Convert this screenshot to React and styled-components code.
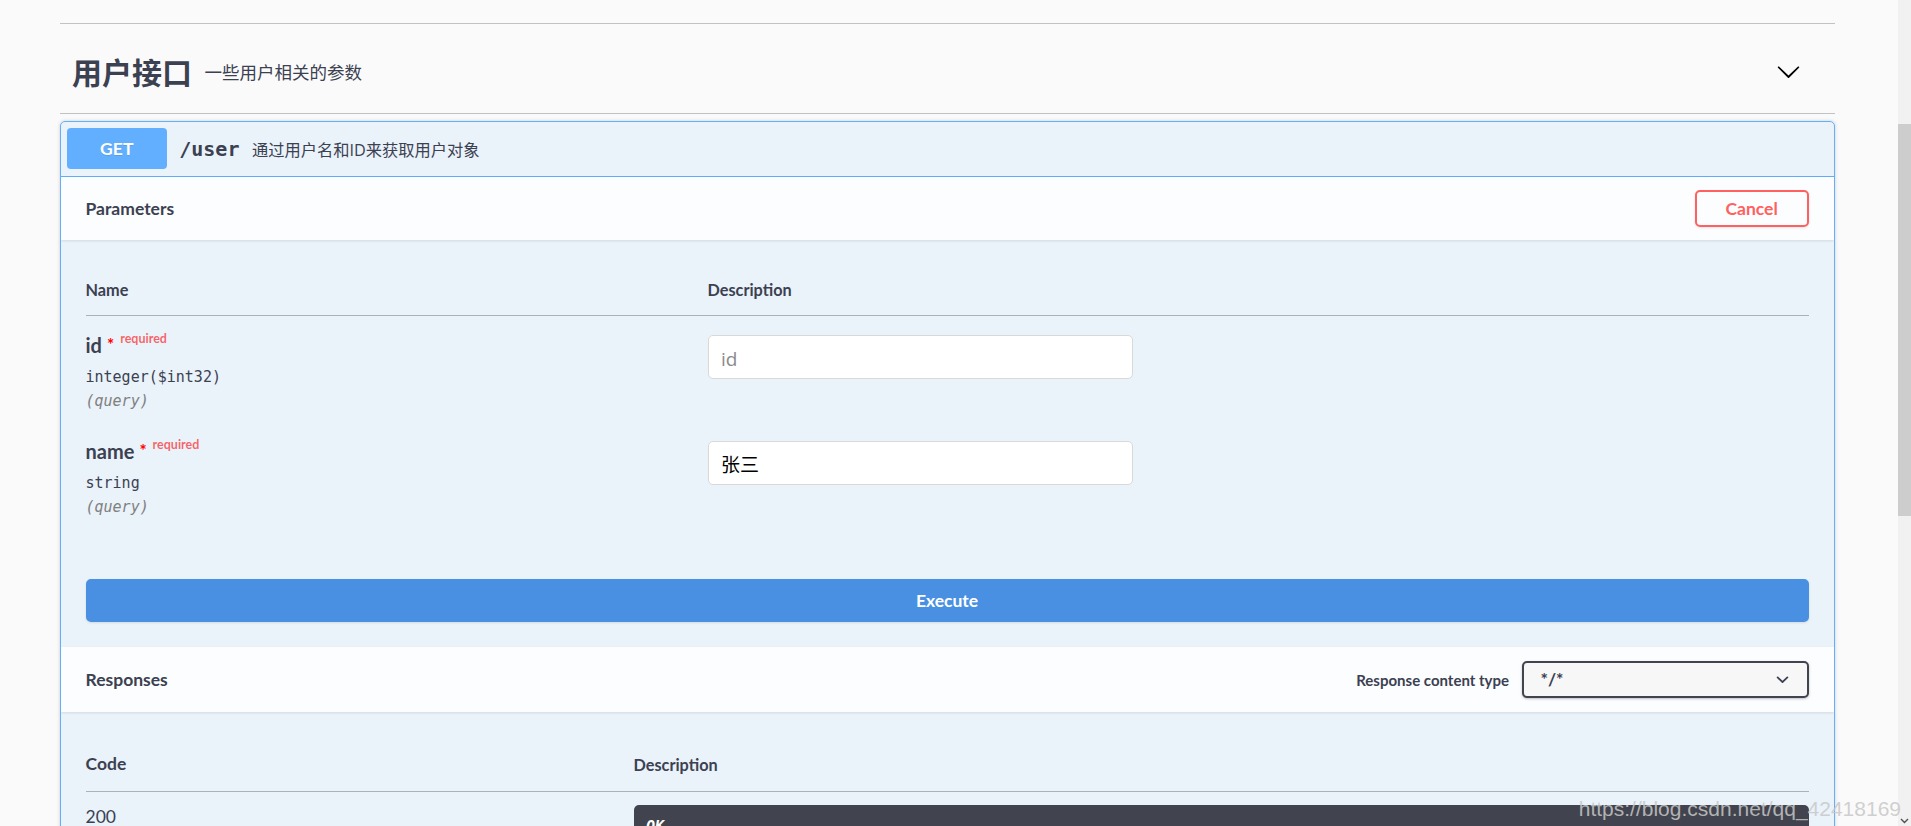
import React from 'react';
import styled, { createGlobalStyle } from 'styled-components';

const GlobalStyle = createGlobalStyle`
  html, body {
    margin: 0;
    padding: 0;
    height: 100%;
    overflow: hidden;
    background: #fafafa;
  }
  * {
    box-sizing: border-box;
  }
`;

const TITLE_FONT = `Lato, "Noto Sans CJK SC", sans-serif`;
const TEXT_FONT = `"Open Sans", "Noto Sans CJK SC", sans-serif`;
const MONO_FONT = `"DejaVu Sans Mono", "Liberation Mono", monospace`;
const INK = '#3b4151';

const Shell = styled.div`
  display: flex;
  height: 100vh;
  overflow: hidden;
`;

const Main = styled.div`
  flex: 1;
  min-width: 0;
  padding-right: 4px;
`;

const Wrapper = styled.div`
  max-width: 1825px;
  margin: 0 auto;
  padding: 0 25px;
`;

const TopRule = styled.div`
  height: 24px;
  border-bottom: 1px solid rgba(59, 65, 81, 0.3);
`;

const Tag = styled.div`
  display: flex;
  align-items: center;
  height: 90px;
  padding: 5px 25px 0 12.5px;
  border-bottom: 1px solid rgba(59, 65, 81, 0.3);
  color: ${INK};
`;

const TagTitle = styled.span`
  font-family: ${TITLE_FONT};
  font-size: 30px;
  font-weight: 700;
`;

const TagDesc = styled.small`
  flex: 1;
  padding: 0 12.5px;
  font-family: ${TEXT_FONT};
  font-size: 17.5px;
  font-weight: 400;
`;

const ExpandButton = styled.span`
  display: flex;
  width: 25px;
  height: 25px;
  margin-right: 9px;
`;

const Opblock = styled.div`
  margin-top: 7px;
  border: 1px solid #61affe;
  border-radius: 5px;
  background: rgba(97, 175, 254, 0.1);
  box-shadow: 0 0 3.75px rgba(0, 0, 0, 0.19);
  overflow: hidden;
`;

const Summary = styled.div`
  display: flex;
  align-items: center;
  padding: 6px 6.25px 7px;
  border-bottom: 1px solid #61affe;
`;

const Method = styled.span`
  min-width: 100px;
  padding: 7.5px 18.75px;
  border-radius: 4px;
  background: #61affe;
  color: #fff;
  font-family: ${TITLE_FONT};
  font-size: 17.5px;
  font-weight: 700;
  line-height: 26px;
  text-align: center;
  text-shadow: 0 1px 0 rgba(0, 0, 0, 0.1);
`;

const Path = styled.span`
  padding: 0 12.5px;
  font-family: ${MONO_FONT};
  font-size: 20px;
  font-weight: 600;
  color: ${INK};
`;

const SummaryDesc = styled.span`
  flex: 1;
  font-family: ${TEXT_FONT};
  font-size: 16.25px;
  color: ${INK};
`;

const SectionHeader = styled.div`
  display: flex;
  align-items: center;
  min-height: ${(p) => p.$height || 62.5}px;
  padding: 10px 25px;
  background: rgba(255, 255, 255, 0.8);
  box-shadow: 0 1px 2.5px rgba(0, 0, 0, 0.1);
`;

const SectionTitle = styled.h4`
  flex: 1;
  margin: 0;
  font-family: ${TITLE_FONT};
  font-size: 17.5px;
  font-weight: 700;
  color: ${INK};
`;

const CancelButton = styled.button`
  height: 37px;
  padding: 0 28.75px;
  border: 2.5px solid #ff6060;
  border-radius: 5px;
  background: transparent;
  color: #ff6060;
  font-family: ${TITLE_FONT};
  font-size: 17.5px;
  font-weight: 700;
  box-shadow: 0 1px 2.5px rgba(0, 0, 0, 0.1);
`;

const TableContainer = styled.div`
  padding: 25px 25px 26.5px;
`;

const Table = styled.table`
  width: 100%;
  border-collapse: collapse;
  table-layout: fixed;
  color: ${INK};
`;

const Th = styled.th`
  width: ${(p) => (p.$width ? `${p.$width}px` : 'auto')};
  padding: ${(p) => (p.$size ? '15px 0 16px' : '14px 0 14px')};
  border-bottom: 1px solid rgba(59, 65, 81, 0.2);
  text-align: left;
  font-family: ${TITLE_FONT};
  font-size: ${(p) => p.$size || 16.25}px;
  font-weight: 700;
  line-height: 22px;
`;

const Td = styled.td`
  padding: ${(p) => p.$top ?? 14.5}px 0 ${(p) => p.$bottom || 0}px;
  vertical-align: top;
`;

const ParamName = styled.div`
  display: flex;
  align-items: flex-start;
  font-family: ${TITLE_FONT};
  font-size: 20px;
  font-weight: 700;
  line-height: 30px;
`;

const Star = styled.span`
  margin-left: 5px;
  color: red;
  font-size: 17px;
  line-height: 30px;
`;

const Required = styled.span`
  position: relative;
  top: -6px;
  padding: 0 6px;
  color: rgba(255, 0, 0, 0.6);
  font-size: 12.5px;
  font-weight: 700;
  line-height: 30px;
`;

const ParamType = styled.div`
  padding: 7.75px 0 4.75px;
  font-family: ${MONO_FONT};
  font-size: 15px;
  font-weight: 400;
  line-height: 18px;
`;

const ParamIn = styled.div`
  font-family: ${MONO_FONT};
  font-size: 15px;
  font-style: italic;
  font-weight: 400;
  line-height: 20px;
  color: gray;
`;

const TextInput = styled.input`
  display: block;
  width: 425px;
  height: 44px;
  margin: 5px 0 0;
  padding: 0 12.5px;
  border: 1px solid #d9d9d9;
  border-radius: 5px;
  background: #fff;
  color: #000;
  font-family: "Noto Sans CJK SC", ${TEXT_FONT};
  font-size: 19px;
  outline: none;
  &::placeholder {
    color: #8a8a8a;
    font-family: ${TEXT_FONT};
  }
`;

const ExecuteWrapper = styled.div`
  padding: 25px;
`;

const ExecuteButton = styled.button`
  display: block;
  width: 100%;
  height: 43px;
  border: 2.5px solid #4990e2;
  border-radius: 5px;
  background: #4990e2;
  color: #fff;
  font-family: ${TITLE_FONT};
  font-size: 17.5px;
  font-weight: 700;
  box-shadow: 0 1px 2.5px rgba(0, 0, 0, 0.1);
`;

const MediaLabel = styled.label`
  display: flex;
  align-items: center;
  gap: 12.5px;
  font-family: ${TITLE_FONT};
  font-size: 15px;
  font-weight: 700;
  color: ${INK};
`;

const SelectBox = styled.div`
  display: flex;
  align-items: center;
  justify-content: space-between;
  width: 287px;
  height: 37px;
  padding: 0 12px 0 17px;
  border: 2.5px solid #41444e;
  border-radius: 5px;
  background: #f7f7f7;
  box-shadow: 0 1px 2.5px rgba(0, 0, 0, 0.25);
  font-family: ${TITLE_FONT};
  font-size: 17.5px;
  font-weight: 700;
  color: ${INK};
`;

const ResponsesInner = styled.div`
  padding: 26px 25px 25px;
`;

const StatusCell = styled.div`
  font-family: ${TITLE_FONT};
  font-size: 17.5px;
  line-height: 24px;
`;

const Markdown = styled.div`
  padding: 12.5px;
  border-radius: 5px;
  background: #41444e;
  color: #fff;
  font-family: ${MONO_FONT};
  font-size: 15px;
  font-style: italic;
  font-weight: 600;
  min-height: 60px;
`;

const ScrollTrack = styled.div`
  display: flex;
  flex-direction: column;
  width: 13px;
  background: #f1f1f1;
`;

const ScrollThumb = styled.div`
  height: 392px;
  margin-top: 124px;
  background: #cdcdcd;
`;

const ScrollArrow = styled.div`
  display: flex;
  justify-content: center;
  margin-top: auto;
  padding-bottom: 2px;
`;

const Watermark = styled.div`
  position: absolute;
  right: 10px;
  bottom: 5px;
  font-family: "Liberation Sans", Arial, sans-serif;
  font-size: 21px;
  color: rgba(200, 200, 200, 0.85);
  pointer-events: none;
`;

const Chevron = ({ size = 25 }) => (
  <svg width={size} height={size} viewBox="0 0 20 20" fill="#000">
    <path d="M17.418 6.109c.272-.268.709-.268.979 0s.271.701 0 .969l-7.908 7.83c-.27.268-.707.268-.979 0l-7.908-7.83c-.27-.268-.27-.701 0-.969.271-.268.709-.268.979 0L10 13.25l7.418-7.141z" />
  </svg>
);

const SmallChevron = () => (
  <svg width="25" height="25" viewBox="0 0 20 20" fill={INK}>
    <path d="M13.418 7.859a.695.695 0 01.978 0 .68.68 0 010 .969l-3.908 3.83a.697.697 0 01-.979 0l-3.908-3.83a.68.68 0 010-.969.695.695 0 01.978 0L10 11l3.418-3.141z" />
  </svg>
);

const params = [
  { name: 'id', type: 'integer($int32)', placeholder: 'id', value: '' },
  { name: 'name', type: 'string', placeholder: 'name', value: '张三' },
];

export default function App() {
  return (
    <>
      <GlobalStyle />
      <Shell>
        <Main>
          <Wrapper>
            <TopRule />
            <Tag>
              <TagTitle>用户接口</TagTitle>
              <TagDesc>一些用户相关的参数</TagDesc>
              <ExpandButton>
                <Chevron />
              </ExpandButton>
            </Tag>
            <Opblock>
              <Summary>
                <Method>GET</Method>
                <Path>/user</Path>
                <SummaryDesc>通过用户名和ID来获取用户对象</SummaryDesc>
              </Summary>
              <SectionHeader>
                <SectionTitle>Parameters</SectionTitle>
                <CancelButton>Cancel</CancelButton>
              </SectionHeader>
              <TableContainer>
                <Table>
                  <thead>
                    <tr>
                      <Th $width={622}>Name</Th>
                      <Th>Description</Th>
                    </tr>
                  </thead>
                  <tbody>
                    {params.map((p) => (
                      <tr key={p.name}>
                        <Td $bottom={11}>
                          <ParamName>
                            {p.name}
                            <Star>*</Star>
                            <Required>required</Required>
                          </ParamName>
                          <ParamType>{p.type}</ParamType>
                          <ParamIn>(query)</ParamIn>
                        </Td>
                        <Td>
                          <TextInput
                            type="text"
                            placeholder={p.placeholder}
                            defaultValue={p.value}
                          />
                        </Td>
                      </tr>
                    ))}
                  </tbody>
                </Table>
              </TableContainer>
              <ExecuteWrapper>
                <ExecuteButton>Execute</ExecuteButton>
              </ExecuteWrapper>
              <SectionHeader $height={65}>
                <SectionTitle>Responses</SectionTitle>
                <MediaLabel>
                  <span>Response content type</span>
                  <SelectBox>
                    <span>*/*</span>
                    <SmallChevron />
                  </SelectBox>
                </MediaLabel>
              </SectionHeader>
              <ResponsesInner>
                <Table>
                  <thead>
                    <tr>
                      <Th $width={548} $size={17.5}>Code</Th>
                      <Th>Description</Th>
                    </tr>
                  </thead>
                  <tbody>
                    <tr>
                      <Td $top={13}>
                        <StatusCell>200</StatusCell>
                      </Td>
                      <Td $top={13}>
                        <Markdown>OK</Markdown>
                      </Td>
                    </tr>
                  </tbody>
                </Table>
              </ResponsesInner>
            </Opblock>
          </Wrapper>
        </Main>
        <ScrollTrack>
          <ScrollThumb />
          <ScrollArrow>
            <svg width="9" height="6" viewBox="0 0 9 6">
              <path d="M1 1l3.5 3.5L8 1" stroke="#505050" strokeWidth="1.4" fill="none" />
            </svg>
          </ScrollArrow>
        </ScrollTrack>
      </Shell>
      <Watermark>https://blog.csdn.net/qq_42418169</Watermark>
    </>
  );
}
